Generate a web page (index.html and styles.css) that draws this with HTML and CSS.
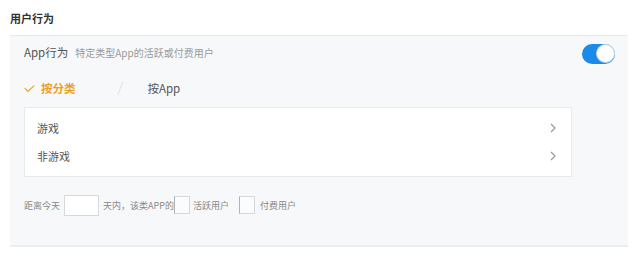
FILE: index.html
```html
<!DOCTYPE html>
<html lang="zh">
<head>
<meta charset="utf-8">
<link rel="stylesheet" href="styles.css">
</head>
<body>
<h2 class="title">用户行为</h2>
<section class="panel">
  <div class="head">
    <div class="head-text"><span class="name">App行为</span><span class="desc">特定类型App的活跃或付费用户</span></div>
    <span class="switch"><span class="knob"></span></span>
  </div>
  <div class="tabs">
    <span class="tab active"><svg class="check" width="11" height="8" viewBox="0 0 11 8"><path d="M0.8 3.2 L3.8 6.4 L10.2 0.6" fill="none" stroke="#f0a020" stroke-width="1.2"/></svg>按分类</span>
    <span class="slash"></span>
    <span class="tab">按App</span>
  </div>
  <div class="list">
    <div class="row"><span>游戏</span><svg class="chev" width="6" height="10" viewBox="0 0 6 10"><path d="M1 1 L5 5 L1 9" fill="none" stroke="#999" stroke-width="1.2"/></svg></div>
    <div class="row"><span>非游戏</span><svg class="chev" width="6" height="10" viewBox="0 0 6 10"><path d="M1 1 L5 5 L1 9" fill="none" stroke="#999" stroke-width="1.2"/></svg></div>
  </div>
  <div class="cond">
    <span>距离今天</span>
    <span class="input"></span>
    <span class="t2">天内，该类APP的</span>
    <span class="box"></span>
    <span class="t3">活跃用户</span>
    <span class="box b2"></span>
    <span class="t4">付费用户</span>
  </div>
</section>
</body>
</html>
```
FILE: styles.css
```css
* { box-sizing: border-box; }
body {
  margin: 0;
  background: #fff;
  font-family: "Noto Sans CJK SC", "Noto Sans", sans-serif;
  color: #555;
}
.title {
  margin: 0;
  padding: 9px 0 0 10px;
  height: 35px;
  font-size: 11px;
  font-weight: 700;
  line-height: 18px;
  color: #333;
}
.panel {
  margin: 0 12px 0 10px;
  height: 212px;
  background: #f7f8fa;
  border-top: 1px solid #e8e9eb;
  border-bottom: 2px solid #ecedf0;
  padding: 0 13px 0 14px;
}
.head {
  height: 33px;
  display: flex;
  align-items: center;
  justify-content: space-between;
}
.head-text { display: flex; align-items: baseline; margin-top: -1px; }
.name { font-size: 11.5px; color: #555; }
.desc { font-size: 10px; color: #9a9a9a; margin-left: 7px; }
.switch {
  width: 33px;
  height: 20px;
  border-radius: 10px;
  background: #1a8be8;
  display: flex;
  justify-content: flex-end;
  align-items: center;
  margin-top: 2px;
}
.knob {
  width: 19px;
  height: 19px;
  border-radius: 50%;
  background: #fff;
  border: 1px solid #c9d3dc;
}
.tabs {
  height: 38px;
  display: flex;
  align-items: center;
  font-size: 11.5px;
}
.tab { display: flex; align-items: center; color: #555; }
.tab.active { color: #f0a020; font-weight: 700; }
.check { margin-right: 6px; margin-top: 1px; }
.slash {
  width: 1px;
  height: 14px;
  background: #e0e0e0;
  transform: rotate(20deg);
  margin: 0 27px 0 44px;
}
.list {
  width: 548px;
  background: #fff;
  border: 1px solid #e9eaec;
  padding: 6px 0;
}
.row {
  height: 28px;
  display: flex;
  align-items: center;
  justify-content: space-between;
  padding: 0 15px 0 12px;
  font-size: 11px;
  color: #555;
}
.cond {
  height: 56px;
  display: flex;
  align-items: center;
  font-size: 9px;
  color: #888;
}
.input {
  width: 35px;
  height: 21px;
  background: #fff;
  border: 1px solid #d8d8d8;
  margin-left: 4px;
}
.t2 { margin-left: 4px; }
.box {
  width: 16px;
  height: 18px;
  background: #fafcfe;
  border: 1px solid #d6d9dc;
  border-left-color: #aab4be;
  margin-left: 0;
}
.t3 { margin-left: 3px; }
.b2 { margin-left: 10px; }
.t4 { margin-left: 5px; }
```
